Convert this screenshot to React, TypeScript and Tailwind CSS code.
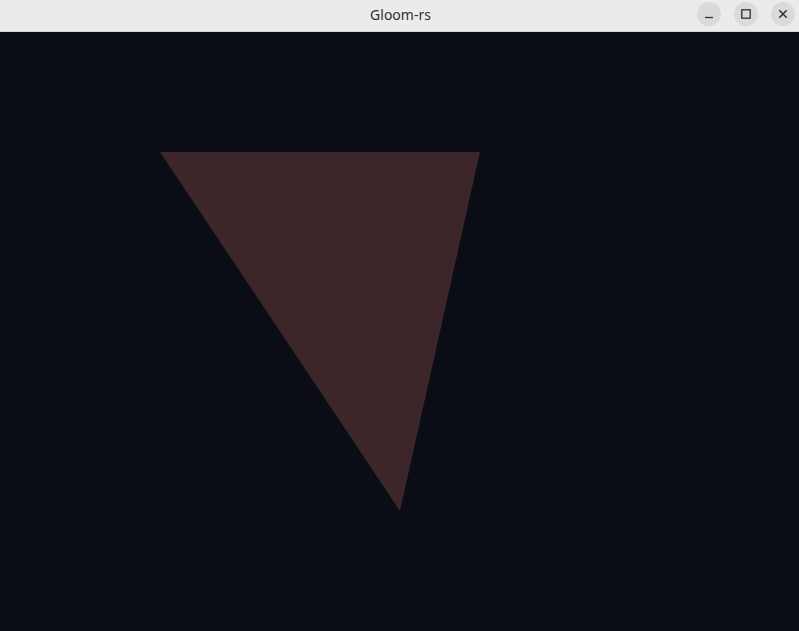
import React from 'react';

const TitleButton: React.FC<{ children: React.ReactNode }> = ({ children }) => (
  <div className="flex h-6 w-6 items-center justify-center rounded-full bg-[#dadada] text-[#2e2e2e]">
    {children}
  </div>
);

const App: React.FC = () => {
  return (
    <div className="flex h-[631px] w-[799px] flex-col overflow-hidden bg-[#0a0d15]">
      <div className="relative flex h-[32px] shrink-0 items-center justify-center border-b border-[#d4d4d4] bg-[#ebebeb] pb-[2px]">
        <span className="pl-[2px] text-[14px] text-[#303030] [font-family:'Noto_Sans',sans-serif]">Gloom-rs</span>
        <div className="absolute right-[4px] top-[2px] flex gap-[13px]">
          <TitleButton>
            <svg width="12" height="12" viewBox="0 0 12 12">
              <path d="M2 9.5h8" stroke="currentColor" strokeWidth="1.3" />
            </svg>
          </TitleButton>
          <TitleButton>
            <svg width="12" height="12" viewBox="0 0 12 12">
              <rect x="1.8" y="1.8" width="8.4" height="8.4" fill="none" stroke="currentColor" strokeWidth="1.3" />
            </svg>
          </TitleButton>
          <TitleButton>
            <svg width="12" height="12" viewBox="0 0 12 12">
              <path d="M2.3 2.3l7.4 7.4M9.7 2.3l-7.4 7.4" stroke="currentColor" strokeWidth="1.5" />
            </svg>
          </TitleButton>
        </div>
      </div>
      <div className="flex-1">
        <svg width="799" height="599" viewBox="0 32 799 599" className="block">
          <polygon points="160,152 480,152 400,511" fill="#3d2629" />
        </svg>
      </div>
    </div>
  );
};

export default App;
